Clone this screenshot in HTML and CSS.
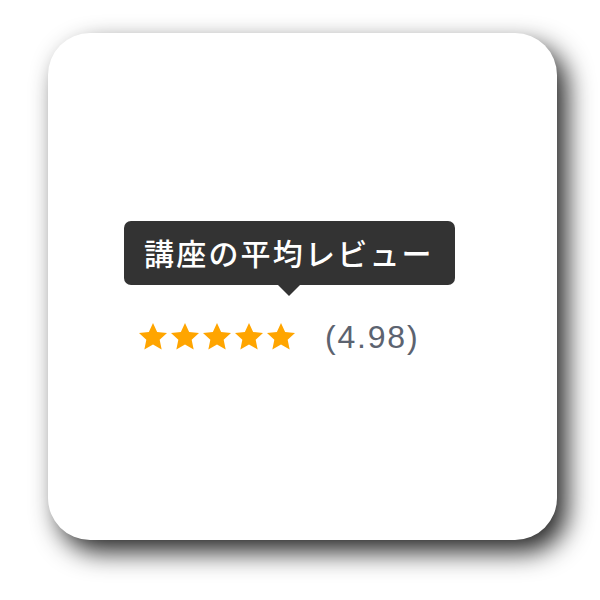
FILE: index.html
```html
<!DOCTYPE html>
<html lang="ja">
<head>
    <meta charset="UTF-8">
    <meta name="viewport" content="width=device-width, initial-scale=1.0">
    <title>講座の平均レビュー</title>
    <link rel="stylesheet" href="styles.css">
</head>
<body>
    <!-- カード -->
    <section class="card">
        <div class="review">
            <div class="tooltip">講座の平均レビュー</div>
            <div class="rating">
                <span class="stars">
                    <svg viewBox="0 0 24 24"><polygon points="12,1.5 15.1,8.2 22.5,9 17,14 18.5,21.3 12,17.6 5.5,21.3 7,14 1.5,9 8.9,8.2"/></svg>
                    <svg viewBox="0 0 24 24"><polygon points="12,1.5 15.1,8.2 22.5,9 17,14 18.5,21.3 12,17.6 5.5,21.3 7,14 1.5,9 8.9,8.2"/></svg>
                    <svg viewBox="0 0 24 24"><polygon points="12,1.5 15.1,8.2 22.5,9 17,14 18.5,21.3 12,17.6 5.5,21.3 7,14 1.5,9 8.9,8.2"/></svg>
                    <svg viewBox="0 0 24 24"><polygon points="12,1.5 15.1,8.2 22.5,9 17,14 18.5,21.3 12,17.6 5.5,21.3 7,14 1.5,9 8.9,8.2"/></svg>
                    <svg viewBox="0 0 24 24"><polygon points="12,1.5 15.1,8.2 22.5,9 17,14 18.5,21.3 12,17.6 5.5,21.3 7,14 1.5,9 8.9,8.2"/></svg>
                </span>
                <span class="score">(4.98)</span>
            </div>
        </div>
    </section>
</body>
</html>
```

FILE: styles.css
```css
/* ページ全体 */
body {
    margin: 0;
    padding: 33px 0 60px 48px;
    background-color: #ffffff;
    font-family: "Liberation Sans", "Noto Sans CJK JP", sans-serif;
}

.card {
    box-sizing: border-box;
    width: 509px;
    height: 507px;
    padding: 188px 0 0 76px;
    background-color: #ffffff;
    border-radius: 42px;
    box-shadow: 10px 12px 26px rgba(0, 0, 0, 0.85);
}

.review {
    display: flex;
    flex-direction: column;
    align-items: flex-start;
}

/* ツールチップ */
.tooltip {
    position: relative;
    box-sizing: border-box;
    width: 331px;
    height: 64px;
    padding-left: 20px;
    background-color: #333333;
    border-radius: 7px;
    color: #ffffff;
    font-family: "Noto Sans CJK JP", sans-serif;
    font-size: 30px;
    font-weight: 500;
    line-height: 62px;
    letter-spacing: 2.2px;
}

.tooltip::after {
    content: "";
    position: absolute;
    left: 154px;
    bottom: -11px;
    border-left: 11px solid transparent;
    border-right: 11px solid transparent;
    border-top: 11px solid #333333;
}

/* 星とスコア */
.rating {
    display: flex;
    align-items: center;
    margin-top: 34px;
    margin-left: 13px;
}

.stars {
    display: flex;
}

.stars svg {
    width: 32px;
    height: 32px;
    fill: #ffa500;
}

.score {
    margin-left: 28px;
    color: #5c6370;
    font-size: 32px;
    line-height: 36px;
    letter-spacing: 1.8px;
}
```
